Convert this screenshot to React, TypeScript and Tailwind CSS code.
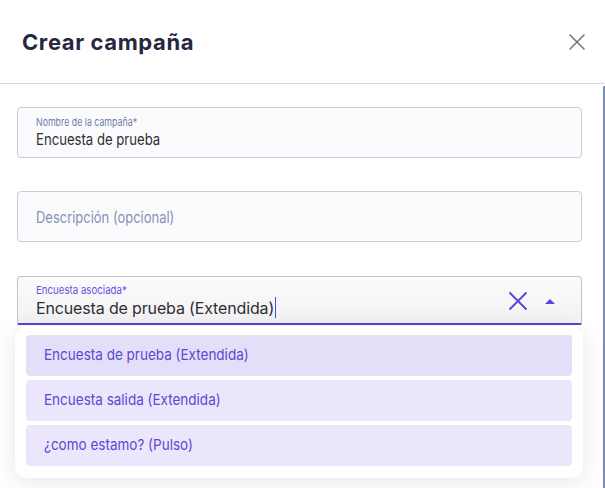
import { X } from 'lucide-react';

const options = [
  { label: 'Encuesta de prueba (Extendida)', active: true },
  { label: 'Encuesta salida (Extendida)', active: false },
  { label: '¿como estamo? (Pulso)', active: false },
];

export default function App() {
  return (
    <div className="relative w-[605px] h-[488px] overflow-hidden bg-white font-['Inter',sans-serif]">
      <header className="h-[84px] flex items-center justify-between pl-[22px] pr-[14px] border-b border-[#d6d6dc]">
        <h1 className="text-[22px] font-bold text-[#272840] tracking-[0.6px] pt-[2px]">Crear campaña</h1>
        <X className="w-[28px] h-[28px] text-[#777]" strokeWidth={1.3} />
      </header>

      <div className="absolute right-0 top-[86px] bottom-0 w-[2px] bg-[#7d8bb3]" />

      <div className="flex flex-col px-[17px] pt-[23px] pr-[23px]">
        <div className="h-[51px] rounded-[4px] border border-[#c9ccd6] bg-[#fbfbfd] px-[18px] pt-[7px]">
          <div className="text-[11px] leading-[14px] text-[#6e7dab] scale-x-[0.8] origin-left whitespace-nowrap">Nombre de la campaña*</div>
          <div className="text-[16px] leading-[20px] text-[#2f2f33] scale-x-[0.82] origin-left whitespace-nowrap">Encuesta de prueba</div>
        </div>

        <div className="mt-[33px] h-[51px] rounded-[4px] border border-[#c9ccd6] bg-[#fbfbfd] px-[18px] flex items-center">
          <div className="text-[16px] text-[#8590b6] scale-x-[0.81] origin-left whitespace-nowrap">Descripción (opcional)</div>
        </div>

        <div className="mt-[34px] h-[49px] rounded-t-[4px] border border-b-0 border-[#c2c4cc] bg-gradient-to-b from-[#fbfbfc] to-[#f2f2f4] flex items-start justify-between pl-[18px] pr-[25px] pt-[6px] shadow-[inset_0_-2px_0_#5b44d8]">
          <div>
            <div className="text-[11px] leading-[14px] text-[#6a4fe2] scale-x-[0.88] origin-left whitespace-nowrap">Encuesta asociada*</div>
            <div className="flex items-center text-[16px] leading-[20px] text-[#2f2f33] tracking-[-0.15px] whitespace-nowrap">
              Encuesta de prueba (Extendida)
              <span className="ml-[1px] w-[1px] h-[21px] bg-[#5b44d8]" />
            </div>
          </div>
          <div className="flex items-center gap-[10px] pt-[2px]">
            <X className="w-[32px] h-[32px] text-[#5b44d8]" strokeWidth={1.4} />
            <svg width="12" height="7" viewBox="0 0 12 7"><path d="M1 6 L6 1 L11 6 Z" fill="#5b44d8" /></svg>
          </div>
        </div>
      </div>

      <div className="absolute left-[15px] top-[326px] w-[568px] h-[152px] rounded-[12px] bg-white shadow-[0_4px_24px_rgba(0,0,0,0.10)] px-[11px] pt-[9px] flex flex-col gap-[4px]">
        {options.map((o) => (
          <div
            key={o.label}
            className={`h-[41px] rounded-[4px] flex items-center px-[18px] ${o.active ? 'bg-[#e4dff8]' : 'bg-[#ebe6fb]'}`}
          >
            <span className="text-[15px] text-[#5c47d6] scale-x-[0.9] origin-left whitespace-nowrap">{o.label}</span>
          </div>
        ))}
      </div>
    </div>
  );
}
